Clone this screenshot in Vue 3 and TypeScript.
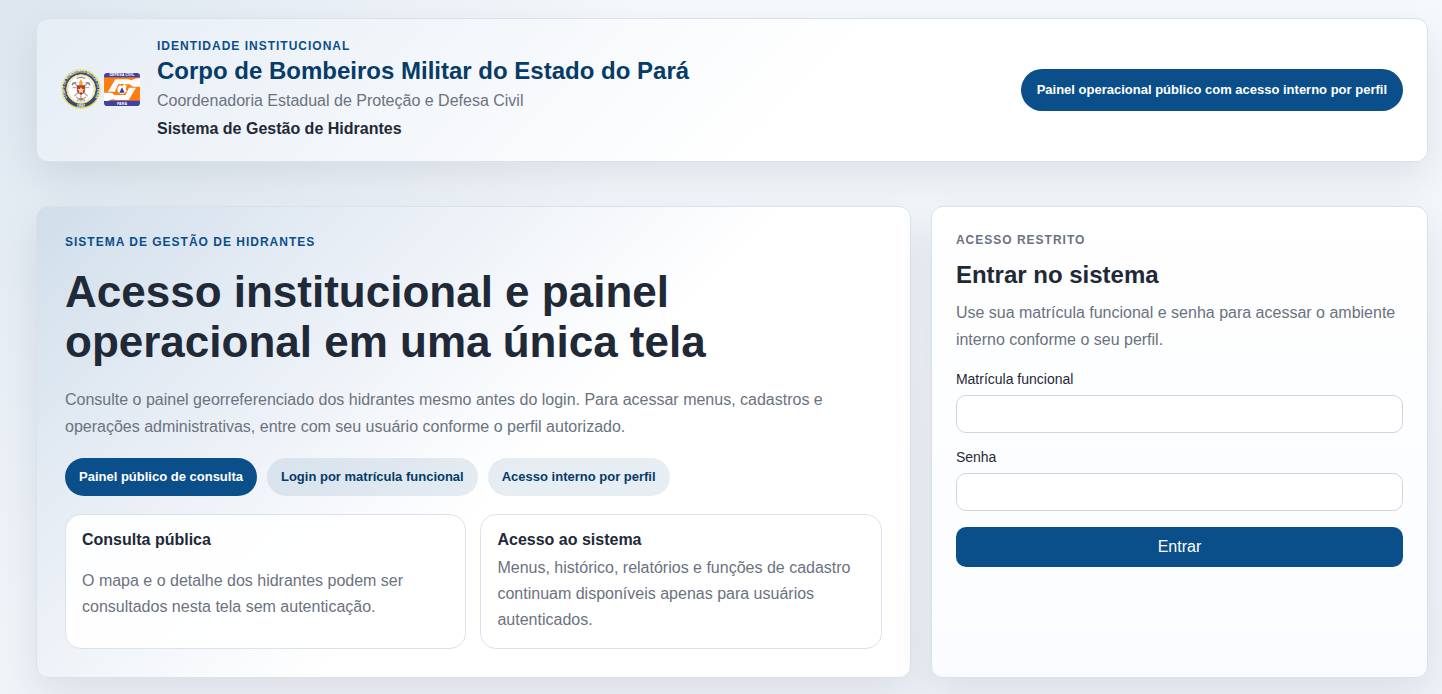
<script setup lang="ts">
import { ref } from 'vue'

interface InfoCard {
  title: string
  text: string
  spaced: boolean
}

const matricula = ref<string>('')
const senha = ref<string>('')

const chips: string[] = ['Painel público de consulta', 'Login por matrícula funcional', 'Acesso interno por perfil']

const cards: InfoCard[] = [
  {
    title: 'Consulta pública',
    text: 'O mapa e o detalhe dos hidrantes podem ser consultados nesta tela sem autenticação.',
    spaced: true,
  },
  {
    title: 'Acesso ao sistema',
    text: 'Menus, histórico, relatórios e funções de cadastro continuam disponíveis apenas para usuários autenticados.',
    spaced: false,
  },
]
</script>

<template>
  <div class="page">
    <header class="panel brand">
      <div class="logos">
        <svg class="seal" viewBox="0 0 120 120" role="img" aria-label="Brasão do Corpo de Bombeiros Militar">
          <defs>
            <path id="seal-top" d="M25 94 A49 49 0 1 1 95 94" />
            <path id="seal-bottom" d="M34 107 A54 54 0 0 0 86 107" />
          </defs>
          <circle cx="60" cy="60" r="57" fill="#3c4a6b" stroke="#e4df62" stroke-width="4" />
          <circle cx="60" cy="60" r="43" fill="#fff" stroke="#e4df62" stroke-width="3" />
          <circle cx="60" cy="60" r="39" fill="none" stroke="#a8a795" stroke-width="1" />
          <text class="seal-text"><textPath href="#seal-top" startOffset="50%" text-anchor="middle">CORPO DE BOMBEIROS MILITAR DO PARÁ</textPath></text>
          <text class="seal-year"><textPath href="#seal-bottom" startOffset="50%" text-anchor="middle">1882</textPath></text>
          <path d="M40 42 L80 82 M80 42 L40 82" stroke="#b5ada0" stroke-width="4" />
          <path d="M34 49 Q35 39 46 42 M86 49 Q85 39 74 42" stroke="#868b89" stroke-width="5" fill="none" />
          <path d="M35 56 h12 M73 56 h12" stroke="#98a09c" stroke-width="3" />
          <path d="M45 84 Q60 96 75 84 M48 94 Q60 88 72 94 M60 79 V98 M47 28 Q60 22 73 28" stroke="#9b7464" stroke-width="3" fill="none" />
          <path d="M60 31 Q68 41 64 50 H56 Q51 41 60 31Z" fill="#f6a13b" />
          <path d="M49 50 H71 V65 Q70 73 60 77 Q50 73 49 65Z" fill="#d32e29" stroke="#7f3929" stroke-width="2" />
          <path d="M60 54 l3 6 7 1 -5 5 1 7 -6 -4 -6 4 1 -7 -5 -5 7 -1z" fill="#ffe9a0" />
        </svg>
        <svg class="defense" viewBox="0 0 108 99" role="img" aria-label="Defesa Civil Pará">
          <rect width="108" height="99" rx="10" fill="#3d42a1" />
          <rect y="13" width="108" height="70" fill="#ff7d10" />
          <path d="M34 19 H72 Q82 24 90 19 T108 16 V41 H90 Q82 41 77 34 H51 L34 56 H12Z" fill="#fff" />
          <path d="M74 81 H36 Q26 76 18 81 T0 83 V59 H18 Q26 59 31 66 H57 L74 44 H96Z" fill="#fff" />
          <path d="M43 33 H65 L75 44 L65 66 H43 L33 55Z" fill="#ff7d10" />
          <path d="M41 44 L47 36 L54 40 L61 33 L68 39 L65 46 L68 55 L60 62 H48 L40 54Z" fill="#fff" />
          <path d="M54 43 L62 59 H46Z" fill="#2d429a" />
          <text x="54" y="10" class="defense-text">DEFESA CIVIL</text>
          <text x="54" y="95" class="defense-text">PARÁ</text>
        </svg>
      </div>
      <div class="brand-copy">
        <span class="eyebrow">IDENTIDADE INSTITUCIONAL</span>
        <strong class="brand-title">Corpo de Bombeiros Militar do Estado do Pará</strong>
        <span class="brand-sub">Coordenadoria Estadual de Proteção e Defesa Civil</span>
        <strong class="brand-system">Sistema de Gestão de Hidrantes</strong>
      </div>
      <span class="status">Painel operacional público com acesso interno por perfil</span>
    </header>

    <main class="columns">
      <section class="panel hero">
        <span class="eyebrow">SISTEMA DE GESTÃO DE HIDRANTES</span>
        <h1>Acesso institucional e painel operacional em uma única tela</h1>
        <p class="lead">
          Consulte o painel georreferenciado dos hidrantes mesmo antes do login. Para acessar menus, cadastros e
          operações administrativas, entre com seu usuário conforme o perfil autorizado.
        </p>
        <div class="chips">
          <span v-for="(chip, i) in chips" :key="chip" class="chip" :class="{ active: i === 0 }">{{ chip }}</span>
        </div>
        <div class="cards">
          <article v-for="card in cards" :key="card.title" class="card" :class="{ spaced: card.spaced }">
            <h3>{{ card.title }}</h3>
            <p>{{ card.text }}</p>
          </article>
        </div>
      </section>

      <section class="panel login">
        <span class="eyebrow muted">ACESSO RESTRITO</span>
        <h2>Entrar no sistema</h2>
        <p class="login-text">Use sua matrícula funcional e senha para acessar o ambiente interno conforme o seu perfil.</p>
        <form @submit.prevent>
          <label for="matricula">Matrícula funcional</label>
          <input id="matricula" v-model="matricula" type="text" autocomplete="username" />
          <label for="senha">Senha</label>
          <input id="senha" v-model="senha" type="password" autocomplete="current-password" />
          <button type="submit">Entrar</button>
        </form>
      </section>
    </main>
  </div>
</template>

<style>
body {
  margin: 0;
  background: #f0f4fa;
}
</style>

<style scoped>
* {
  box-sizing: border-box;
}

.page {
  min-height: 100vh;
  padding: 18px 14px 16px 36px;
  font-family: Arial, 'Liberation Sans', sans-serif;
  font-size: 16px;
  line-height: 24px;
  color: #1f2937;
  background:
    radial-gradient(circle at top left, rgba(11, 79, 138, 0.1), transparent 40%),
    linear-gradient(180deg, #f5f8fc 0%, #f0f4f9 100%);
}

.panel {
  border: 1px solid #d7e2ec;
  border-radius: 12px;
  box-shadow: 0 16px 40px rgba(31, 41, 55, 0.1);
}

.brand {
  display: flex;
  align-items: center;
  gap: 17px;
  padding: 18px 24px;
  background: linear-gradient(135deg, #e6edf5 0%, #fff 55%);
}

.logos {
  display: flex;
  align-items: center;
  gap: 3px;
  padding-bottom: 2px;
}

.seal {
  width: 40px;
  height: 40px;
}

.defense {
  width: 36px;
  height: 33px;
}

.seal-text,
.seal-year,
.defense-text {
  font-weight: 700;
  fill: #fff;
}

.seal-text {
  font-size: 10px;
}

.seal-year {
  font-size: 12px;
}

.defense-text {
  font-size: 11px;
  text-anchor: middle;
}

.brand-copy {
  display: flex;
  flex: 1;
  flex-direction: column;
  padding-bottom: 2px;
}

.eyebrow {
  display: block;
  font-size: 12px;
  font-weight: 700;
  line-height: 18px;
  letter-spacing: 1px;
  color: #0b4f8a;
}

.muted {
  color: #6b7280;
}

.brand-title {
  margin: 2px 0 4px;
  font-size: 24px;
  line-height: 28px;
  color: #073b68;
}

.brand-sub {
  color: #6b7280;
}

.brand-system {
  margin-top: 4px;
}

.status {
  padding: 11px 16px;
  border-radius: 21px;
  font-size: 13px;
  font-weight: 700;
  line-height: 20px;
  color: #fff;
  background: #0b4f8a;
}

.columns {
  display: grid;
  grid-template-columns: 44fr 25fr;
  gap: 20px;
  margin-top: 44px;
}

.hero {
  padding: 26px 28px 28px;
  background: linear-gradient(135deg, #d0deea 0%, #e7edf5 25%, #fff 56%);
}

h1 {
  max-width: 720px;
  margin: 16px 0 19px;
  font-size: 44px;
  line-height: 50px;
}

h2,
h3,
p {
  margin: 0;
}

.lead {
  max-width: 780px;
  line-height: 27px;
  color: #6b7280;
}

.chips {
  display: flex;
  flex-wrap: wrap;
  gap: 10px;
  margin-top: 18px;
}

.chip {
  padding: 9px 14px;
  border-radius: 19px;
  font-size: 13px;
  font-weight: 700;
  line-height: 20px;
  color: #073b68;
  background: rgba(11, 79, 138, 0.1);
}

.chip.active {
  color: #fff;
  background: #0b4f8a;
}

.cards {
  display: grid;
  grid-template-columns: 1fr 1fr;
  gap: 14px;
  margin-top: 18px;
}

.card {
  padding: 13px 16px 15px;
  border: 1px solid #d9e3f0;
  border-radius: 16px;
  background: rgba(255, 255, 255, 0.9);
}

h3 {
  font-size: 16px;
  line-height: 24px;
}

.card p {
  margin-top: 3px;
  line-height: 26px;
  color: #6b7280;
}

.card.spaced p {
  margin-top: 16px;
}

.login {
  padding: 24px;
  background: linear-gradient(180deg, #fff 0%, #fafcff 100%);
}

h2 {
  margin: 12px 0 10px;
  font-size: 24px;
  line-height: 28px;
}

.login-text {
  line-height: 27px;
  color: #6b7280;
}

form {
  display: flex;
  flex-direction: column;
  margin-top: 16px;
}

label {
  margin-bottom: 6px;
  font-size: 14px;
  line-height: 20px;
}

input {
  width: 100%;
  height: 38px;
  margin-bottom: 14px;
  padding: 6px 12px;
  border: 1px solid #d1d5db;
  border-radius: 10px;
  font: inherit;
  color: inherit;
  background: #fff;
}

button {
  margin-top: 2px;
  padding: 8px 12px;
  border: 0;
  border-radius: 10px;
  font: inherit;
  color: #fff;
  background: #0b4f8a;
  cursor: pointer;
}
</style>
